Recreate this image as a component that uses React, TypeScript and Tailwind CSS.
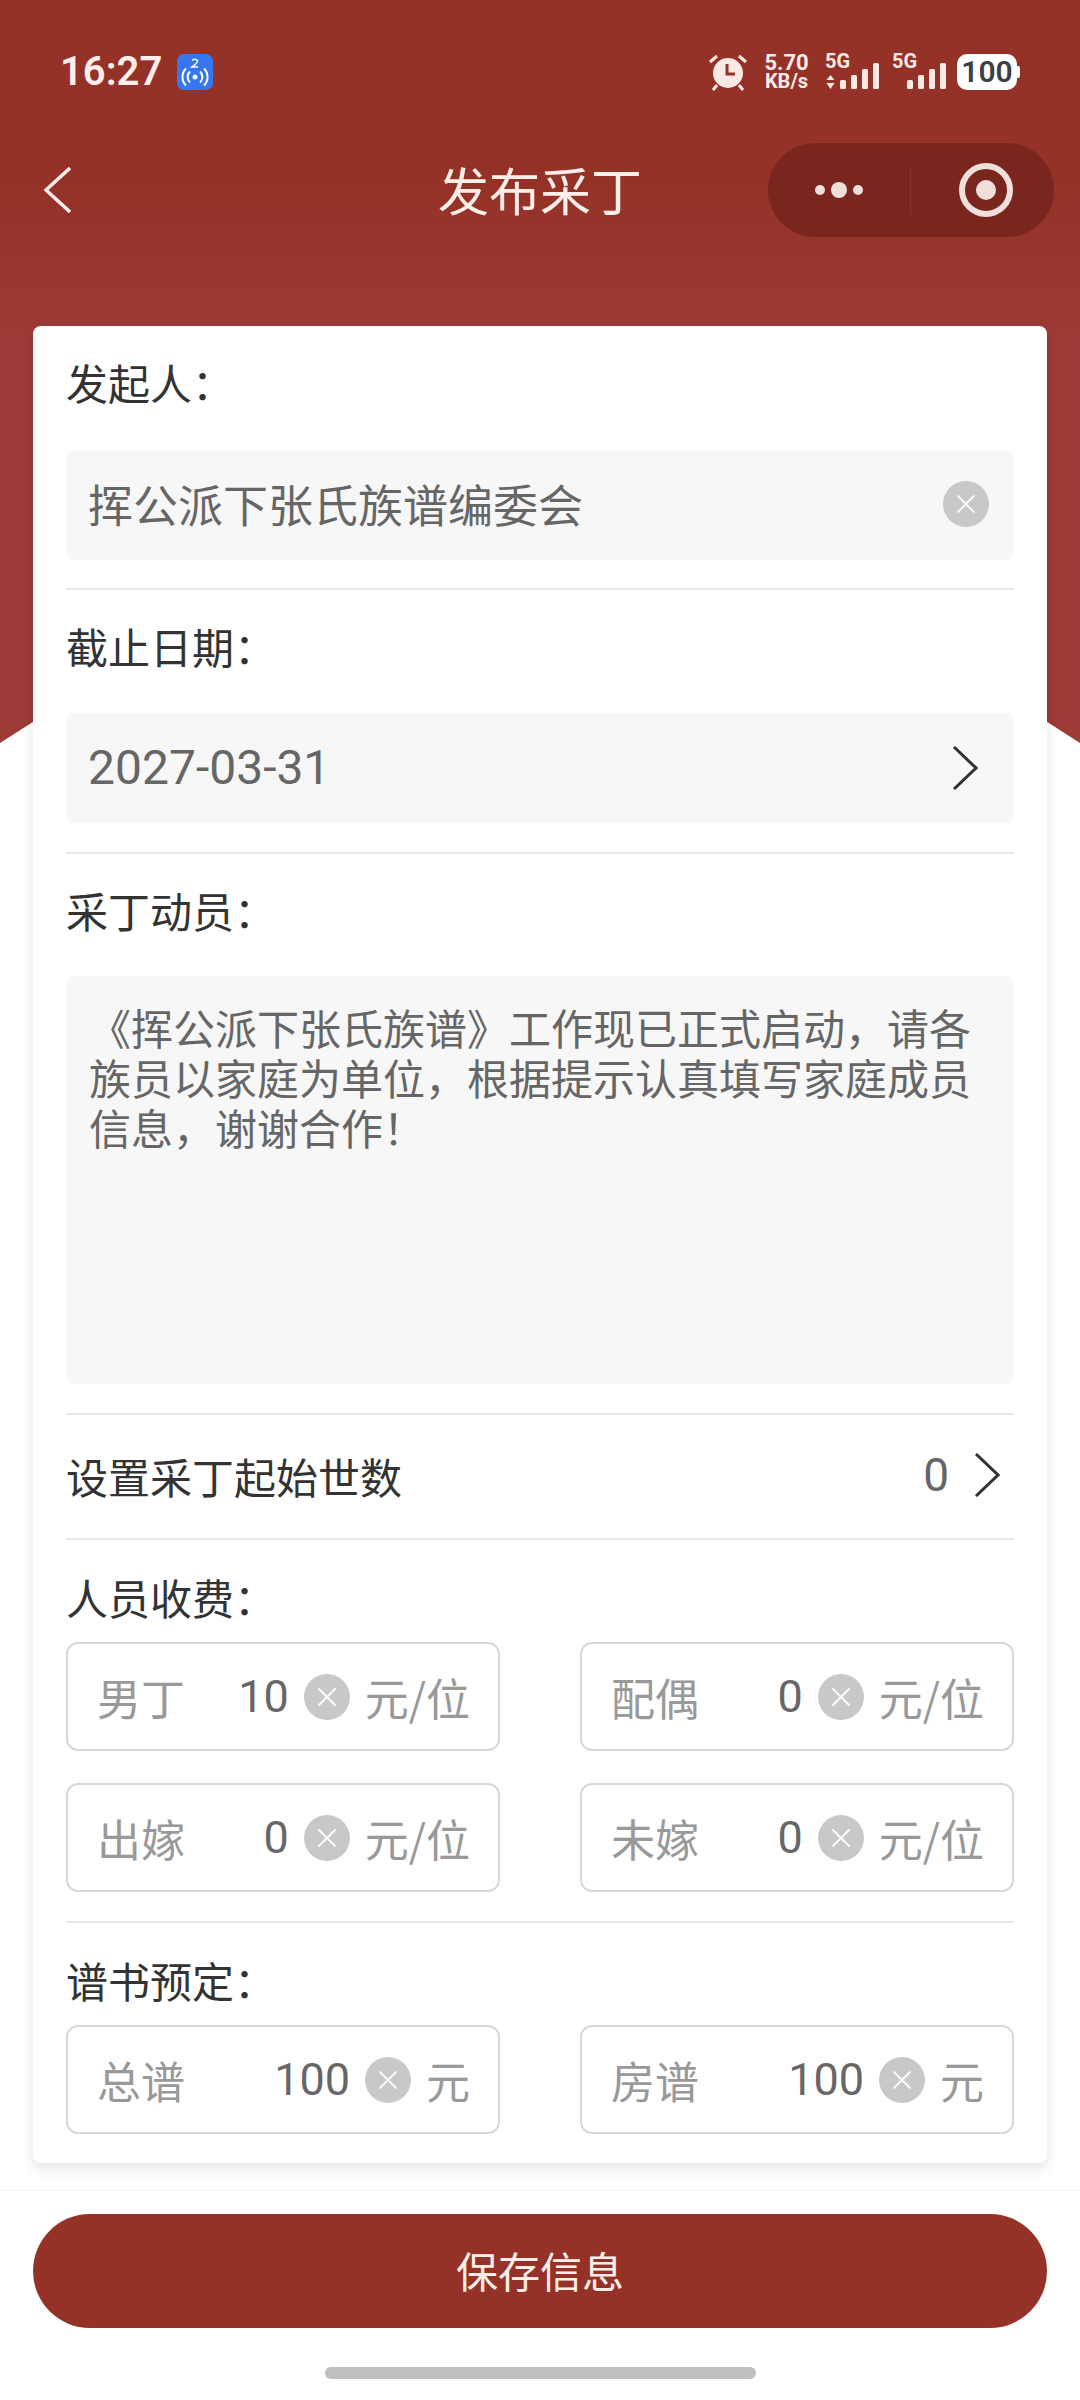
import React from 'react';

const CJK = "font-['Noto_Sans_CJK_SC','Noto_Sans',sans-serif]";

const ClearIcon = () => (
  <svg width="46" height="46" viewBox="0 0 46 46" className="shrink-0">
    <circle cx="23" cy="23" r="23" fill="#c8c8c8" />
    <path d="M14.5 14.5 L31.5 31.5 M31.5 14.5 L14.5 31.5" stroke="#fff" strokeWidth="1.8" />
  </svg>
);

const Chevron = () => (
  <svg width="26" height="44" viewBox="0 0 26 44" fill="none" className="shrink-0">
    <path d="M2 1 L24 22 L2 43" stroke="#333" strokeWidth="3" />
  </svg>
);

const Divider = () => <div className="h-[2px] bg-[#e8e8e8]" />;

const Label = ({ text }: { text: string }) => (
  <div className="h-[116px] pb-[6px] flex items-center text-[42px] text-[#333]">{text}</div>
);

const SmallLabel = ({ text }: { text: string }) => (
  <div className="h-[102px] pt-[10px] flex items-center text-[42px] text-[#333]">{text}</div>
);

const Field = ({ label, value, unit }: { label: string; value: string; unit: string }) => (
  <div className="h-[109px] border-2 border-[#d8d8d8] rounded-[12px] pl-[29px] pr-[28px] flex items-center text-[44px]">
    <span className="text-[#999]">{label}</span>
    <span className="ml-auto text-[#666] text-[45px] font-['Roboto',sans-serif]">{value}</span>
    <span className="mx-[15px]"><ClearIcon /></span>
    <span className="text-[#999]">{unit}</span>
  </div>
);

const Signal = ({ arrows }: { arrows?: boolean }) => (
  <div className="relative w-[56px] h-[36px]">
    <span className="absolute left-0 top-[-3px] text-[20px] leading-[20px] font-bold text-[#fbe9e5] font-['Roboto',sans-serif]">5G</span>
    <svg width="56" height="36" viewBox="0 0 56 36" className="absolute left-0 top-0">
      {arrows && <path d="M5.500 21 L9.500 26 H1.500 Z M5.500 35 L9.500 29 H1.500 Z" fill="#fbe9e5" />}
      <rect x="15" y="26" width="6" height="9" rx="1.500" fill="#fbe9e5" />
      <rect x="26" y="21" width="6" height="14" rx="1.500" fill="#fbe9e5" />
      <rect x="37" y="15" width="6" height="20" rx="1.500" fill="#fbe9e5" />
      <rect x="48" y="9" width="6" height="26" rx="1.500" fill="#fbe9e5" />
    </svg>
  </div>
);

export default function App() {
  return (
    <div className={`relative w-[1080px] h-[2400px] overflow-hidden bg-white flex flex-col ${CJK}`}>
      {/* red backdrop, ends in a shallow peak behind the card */}
      <div className="absolute left-0 top-0 w-[1080px] h-[743px] bg-linear-to-b from-[#943228] from-25% to-[#9c3b35] to-45% [clip-path:polygon(0_0,100%_0,100%_743px,50%_398px,0_743px)]" />

      {/* status bar */}
      <div className="relative mt-[53px] h-[37px] pl-[60px] pr-[63px] flex items-center">
        <span className="text-[40px] leading-none font-semibold text-[#fdeee9] font-['Roboto',sans-serif]">16:27</span>
        <div className="ml-[15px] w-[36px] h-[36px] rounded-[7px] bg-[#3477ee] flex items-center justify-center">
          <svg width="30" height="30" viewBox="0 0 30 30" fill="none">
            <circle cx="15" cy="20" r="2.500" fill="#fff" />
            <path d="M10 14.500 a7.500 7.500 0 0 0 0 11 M20 14.500 a7.500 7.500 0 0 1 0 11 M6 11.500 a12 12 0 0 0 0 17 M24 11.500 a12 12 0 0 1 0 17" stroke="#fff" strokeWidth="2" />
            <path d="M12 3.500 q3 -2.500 5.500 0 q0.500 2 -5.500 6.500 h6" stroke="#fff" strokeWidth="1.600" />
          </svg>
        </div>
        <div className="ml-auto flex items-center">
          <svg width="40" height="38" viewBox="0 0 40 38" fill="none">
            <circle cx="20" cy="20" r="15" fill="#fbe9e5" />
            <path d="M19 11 V21 H27" stroke="#943228" strokeWidth="3" />
            <path d="M2 9 L9 3 M38 9 L31 3 M9 32 L5 37 M31 32 L35 37" stroke="#fbe9e5" strokeWidth="3" />
          </svg>
          <div className="ml-[17px] w-[43px] flex flex-col items-center text-[#fbe9e5] font-bold font-['Roboto',sans-serif]">
            <span className="text-[22px] leading-[20px]">5.70</span>
            <span className="text-[20px] leading-[17px]">KB/s</span>
          </div>
          <div className="ml-[17px]"><Signal arrows /></div>
          <div className="ml-[11px]"><Signal /></div>
          <div className="ml-[9px] relative w-[60px] h-[36px] rounded-[10px] bg-white flex items-center justify-center text-[30px] leading-none font-semibold text-[#3d4043] font-['Roboto',sans-serif]">
            100
            <span className="absolute right-[-3px] top-[12px] w-[3px] h-[12px] rounded-r-[2px] bg-white" />
          </div>
        </div>
      </div>

      {/* nav bar */}
      <div className="relative mt-[53px] h-[94px] pl-[44px] pr-[26px] flex items-center">
        <svg width="27" height="48" viewBox="0 0 27 48" fill="none">
          <path d="M26 2 L2 24 L26 46" stroke="#fdeee9" strokeWidth="3.500" />
        </svg>
        <span className="absolute left-[438px] pb-[2px] text-[51px] leading-none text-[#fdeee9]">发布采丁</span>
        <div className="ml-auto w-[286px] h-[94px] rounded-[47px] bg-[#79261f] flex items-center">
          <div className="w-[143px] h-[50px] flex items-center justify-center gap-[6px] border-r border-r-[#86332b]">
            <span className="w-[10px] h-[10px] rounded-full bg-[#f0dfdb]" />
            <span className="w-[16px] h-[16px] rounded-full bg-[#f0dfdb]" />
            <span className="w-[10px] h-[10px] rounded-full bg-[#f0dfdb]" />
          </div>
          <div className="flex-1 pl-[6px] flex items-center justify-center">
            <div className="w-[54px] h-[54px] rounded-full border-[6px] border-[#f0dfdb] flex items-center justify-center">
              <span className="w-[20px] h-[20px] rounded-full bg-[#f0dfdb]" />
            </div>
          </div>
        </div>
      </div>

      {/* form card */}
      <div className="relative mt-[89px] mx-[33px] h-[1837px] rounded-[8px] bg-white px-[33px] shadow-[0_6px_14px_rgba(0,0,0,0.1)] overflow-hidden">
        <Label text="发起人：" />
        <div className="mt-[8px] h-[110px] rounded-[8px] bg-[#f7f7f7] pl-[22px] pr-[25px] pb-[2px] flex items-center justify-between text-[45px] text-[#666]">
          <span>挥公派下张氏族谱编委会</span>
          <ClearIcon />
        </div>
        <div className="mt-[28px]"><Divider /></div>

        <Label text="截止日期：" />
        <div className="mt-[7px] h-[110px] rounded-[8px] bg-[#f7f7f7] pl-[22px] pr-[36px] flex items-center justify-between text-[48px] text-[#666]">
          <span className="font-['Roboto',sans-serif]">2027-03-31</span>
          <Chevron />
        </div>
        <div className="mt-[29px]"><Divider /></div>

        <Label text="采丁动员：" />
        <div className="mt-[6px] h-[408px] rounded-[8px] bg-[#f7f7f7] px-[23px] pt-[26px] text-[42px] leading-[50px] text-[#666]">
          《挥公派下张氏族谱》工作现已正式启动，请各族员以家庭为单位，根据提示认真填写家庭成员信息，谢谢合作！
        </div>
        <div className="mt-[29px]"><Divider /></div>

        <div className="h-[123px] pb-[3px] flex items-center text-[42px] text-[#333]">
          <span>设置采丁起始世数</span>
          <span className="ml-auto text-[46px] text-[#666] font-['Roboto',sans-serif]">0</span>
          <span className="ml-[25px] mr-[14px]"><Chevron /></span>
        </div>
        <Divider />

        <SmallLabel text="人员收费：" />
        <div className="grid grid-cols-2 gap-x-[80px] gap-y-[32px]">
          <Field label="男丁" value="10" unit="元/位" />
          <Field label="配偶" value="0" unit="元/位" />
          <Field label="出嫁" value="0" unit="元/位" />
          <Field label="未嫁" value="0" unit="元/位" />
        </div>
        <div className="mt-[29px]"><Divider /></div>

        <SmallLabel text="谱书预定：" />
        <div className="grid grid-cols-2 gap-x-[80px]">
          <Field label="总谱" value="100" unit="元" />
          <Field label="房谱" value="100" unit="元" />
        </div>
        <div className="mt-[29px]"><Divider /></div>
      </div>

      {/* bottom action */}
      <div className="relative mt-[27px] border-t border-t-[#f4f4f4] pt-[23px] px-[33px]">
        <div className="h-[114px] rounded-[57px] bg-[#943228] pb-[3px] flex items-center justify-center text-[42px] text-[#fdeee9]">
          保存信息
        </div>
      </div>
      <div className="relative mt-[39px] mx-auto w-[431px] h-[12px] rounded-[6px] bg-[#bfbfbf]" />
    </div>
  );
}
